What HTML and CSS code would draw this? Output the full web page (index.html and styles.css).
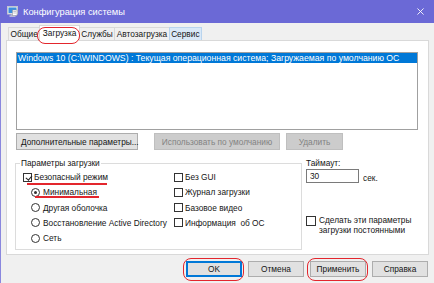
FILE: index.html
```html
<!DOCTYPE html>
<html lang="ru">
<head>
    <meta charset="UTF-8">
    <meta name="viewport" content="width=device-width, initial-scale=1.0">
    <title>Конфигурация системы</title>
    <link rel="stylesheet" href="styles.css">
</head>
<body>
    <div class="window">
        <div class="titlebar">
            <svg class="app-icon" viewBox="0 0 11 11">
                <rect x="0.5" y="0.5" width="10" height="7.5" fill="#eceef4" stroke="#c4c6d0"/>
                <rect x="1.5" y="1.5" width="8" height="5.5" fill="#3b8fe0"/>
                <rect x="4" y="8" width="3" height="1.5" fill="#b4b6c0"/>
                <rect x="2.5" y="9.5" width="6" height="1.2" fill="#d6d8e0"/>
                <rect x="5.5" y="4" width="4.5" height="5.5" fill="#fff" stroke="#8a8c96" stroke-width="0.5"/>
                <line x1="6.3" y1="5.5" x2="9.2" y2="5.5" stroke="#8a8c96" stroke-width="0.5"/>
                <line x1="6.3" y1="7" x2="9.2" y2="7" stroke="#8a8c96" stroke-width="0.5"/>
            </svg>
            <span class="title">Конфигурация системы</span>
            <svg class="close" viewBox="0 0 8 8">
                <path d="M0.5 0.5 L7.5 7.5 M7.5 0.5 L0.5 7.5" stroke="#fff" stroke-width="1"/>
            </svg>
        </div>

        <div class="client">
            <div class="tabs">
                <div class="tab">Общие</div>
                <div class="tab active marked">Загрузка</div>
                <div class="tab">Службы</div>
                <div class="tab">Автозагрузка</div>
                <div class="tab hover">Сервис</div>
            </div>

            <div class="panel">
                <div class="os-list">
                    <div class="os-item selected">Windows 10 (C:\WINDOWS) : Текущая операционная система; Загружаемая по умолчанию ОС</div>
                </div>

                <div class="btn-row">
                    <button class="btn btn-advanced">Дополнительные параметры...</button>
                    <button class="btn btn-default-os" disabled>Использовать по умолчанию</button>
                    <button class="btn btn-delete" disabled>Удалить</button>
                </div>

                <div class="lower">
                    <fieldset class="boot-options">
                        <legend>Параметры загрузки</legend>
                        <div class="opts">
                            <div class="col">
                                <label class="opt line-safe"><input type="checkbox" checked><span>Безопасный режим</span></label>
                                <label class="opt sub line-min"><input type="radio" name="safe" checked><span>Минимальная</span></label>
                                <label class="opt sub"><input type="radio" name="safe"><span>Другая оболочка</span></label>
                                <label class="opt sub"><input type="radio" name="safe"><span>Восстановление Active Directory</span></label>
                                <label class="opt sub"><input type="radio" name="safe"><span>Сеть</span></label>
                            </div>
                            <div class="col">
                                <label class="opt"><input type="checkbox"><span>Без GUI</span></label>
                                <label class="opt"><input type="checkbox"><span>Журнал загрузки</span></label>
                                <label class="opt"><input type="checkbox"><span>Базовое видео</span></label>
                                <label class="opt"><input type="checkbox"><span>Информация&nbsp; об ОС</span></label>
                            </div>
                        </div>
                    </fieldset>

                    <div class="side">
                        <label class="timeout-label" for="timeout">Таймаут:</label>
                        <div class="timeout">
                            <input type="text" id="timeout" value="30">
                            <span>сек.</span>
                        </div>
                        <label class="opt persist"><input type="checkbox"><span>Сделать эти параметры<br>загрузки постоянными</span></label>
                    </div>
                </div>
            </div>

            <div class="footer">
                <button class="btn btn-ok marked">OK</button>
                <button class="btn">Отмена</button>
                <button class="btn marked">Применить</button>
                <button class="btn">Справка</button>
            </div>
        </div>
    </div>
</body>
</html>
```

FILE: styles.css
```css
* {
    margin: 0;
    padding: 0;
    box-sizing: border-box;
}

body {
    font-family: "Liberation Sans", Arial, sans-serif;
    font-size: 8.3px;
    color: #151515;
    background: #f0f0f0;
}

.window {
    width: 434px;
    height: 283px;
    overflow: hidden;
    display: flex;
    flex-direction: column;
}

/* title bar */
.titlebar {
    height: 23px;
    flex: none;
    background: #6b69d6;
    color: #fff;
    display: flex;
    align-items: center;
    padding: 0 10px 0 7px;
}

.app-icon {
    width: 11px;
    height: 11px;
}

.title {
    flex: 1;
    margin-left: 5px;
    font-size: 9.3px;
}

.close {
    width: 7px;
    height: 7px;
}

.client {
    flex: 1;
    border-left: 1px solid #8a87de;
    padding: 0 5px;
}

/* tabs */
.tabs {
    display: flex;
    align-items: flex-end;
    height: 17px;
    padding-left: 3px;
}

.tab {
    height: 13px;
    line-height: 12px;
    padding: 0 1.5px;
    margin-left: -1px;
    border: 1px solid #d9d9d9;
    border-bottom: none;
    background: #f0f0f0;
    white-space: nowrap;
}

.tab.active {
    height: 16px;
    line-height: 15px;
    margin-bottom: -1px;
    padding: 0 2.5px;
    background: #fff;
    position: relative;
    z-index: 1;
}

.tab.hover {
    background: #d9e8f7;
    border-color: #b9d4ee;
}

/* panel */
.panel {
    height: 215px;
    background: #fff;
    border: 1px solid #d9d9d9;
    padding: 11px 10px 0 9px;
}

.os-list {
    height: 78px;
    border: 1px solid #a0a0a0;
}

.os-item {
    font-size: 8.7px;
    line-height: 10px;
    padding: 0 1px;
    white-space: nowrap;
}

.os-item.selected {
    background: #0078d7;
    color: #fff;
}

.btn {
    font: inherit;
    height: 17px;
    padding: 0 4px;
    color: #151515;
    background: #e1e1e1;
    border: 1px solid #adadad;
    white-space: nowrap;
}

.btn:disabled {
    color: #838383;
    background: #cccccc;
    border-color: #bfbfbf;
}

.btn-row {
    display: flex;
    margin-top: 3px;
}

.btn-advanced {
    width: 122px;
    margin-right: 16px;
}

.btn-default-os {
    width: 126px;
    margin-right: 6px;
}

.btn-delete {
    width: 57px;
}

/* boot options */
.lower {
    display: flex;
    align-items: flex-start;
    margin-top: 8px;
}

.boot-options {
    width: 287px;
    height: 92px;
    margin-left: -1px;
    border: 1px solid #dcdcdc;
    min-inline-size: 0;
}

.boot-options legend {
    margin-left: 4px;
    padding: 0 1px;
    line-height: 10px;
}

.opts {
    display: grid;
    grid-template-columns: 151px 1fr;
    padding: 1.5px 0 0 7px;
}

.col {
    display: flex;
    flex-direction: column;
}

.opt {
    display: flex;
    align-items: center;
    height: 15.25px;
    white-space: nowrap;
    position: relative;
}

.opt.sub {
    padding-left: 8px;
}

input[type="checkbox"],
input[type="radio"] {
    appearance: none;
    flex: none;
    width: 9px;
    height: 9px;
    margin-right: 2px;
    border: 1px solid #333;
    background: #fff;
    position: relative;
}

input[type="radio"] {
    border-radius: 50%;
    margin-right: 3px;
}

input[type="radio"]:checked::before {
    content: "";
    position: absolute;
    top: 2px;
    left: 2px;
    width: 3px;
    height: 3px;
    border-radius: 50%;
    background: #333;
}

input[type="checkbox"]:checked::before {
    content: "";
    position: absolute;
    left: 2.5px;
    top: 0;
    width: 2.5px;
    height: 5px;
    border-right: 1.2px solid #222;
    border-bottom: 1.2px solid #222;
    transform: rotate(40deg);
}

/* red marks */
.line-safe::after,
.line-min::after {
    content: "";
    position: absolute;
    height: 1.6px;
    background: #e3262d;
}

.line-safe::after {
    left: 4px;
    width: 80px;
    top: 13.5px;
}

.line-min::after {
    left: 12px;
    width: 64px;
    top: 11.5px;
}

.marked {
    position: relative;
}

.marked::after {
    content: "";
    position: absolute;
    border: 1.5px solid #e3262d;
    border-radius: 8px;
}

.tab.marked::after {
    top: 1px;
    bottom: -3px;
    left: -3px;
    right: -1px;
}

.btn.marked::after {
    top: -4px;
    bottom: -5px;
    left: -4px;
    right: -3px;
}

/* right column */
.side {
    display: flex;
    flex-direction: column;
    margin-left: 4px;
}

.timeout-label {
    line-height: 10px;
}

.timeout {
    display: flex;
    align-items: center;
    margin-top: 1px;
}

input[type="text"] {
    font: inherit;
    color: #151515;
    width: 53px;
    height: 14px;
    padding: 0 3px;
    border: 1px solid #7a7a7a;
}

.timeout span {
    margin: 3px 0 0 4px;
}

.opt.persist {
    height: auto;
    align-items: flex-start;
    margin-top: 33px;
}

.persist input[type="checkbox"] {
    width: 10px;
    height: 10px;
    margin-right: 3px;
}

.persist span {
    line-height: 9.5px;
}

/* footer */
.footer {
    display: flex;
    justify-content: flex-end;
    gap: 6px;
    padding: 6px 1px 0 0;
}

.footer .btn {
    width: 56px;
    height: 16px;
}

.btn-ok {
    border-color: #0078d7;
    box-shadow: inset 0 0 0 1px #0078d7;
}
```
